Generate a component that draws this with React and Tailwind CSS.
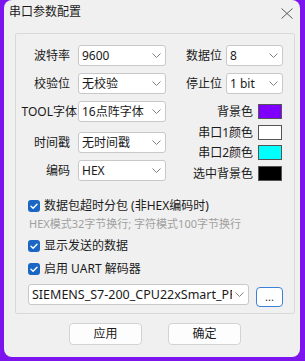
import React from 'react';

const Chevron = () => (
    <svg width="9" height="5" viewBox="0 0 9 5" className="shrink-0">
        <path d="M0.5 0.5 L4.5 4.5 L8.5 0.5" fill="none" stroke="#808080" strokeWidth="1" />
    </svg>
);

const Check = () => (
    <span className="w-[12px] h-[12px] rounded-[3px] bg-[#1a66c4] flex items-center justify-center shrink-0">
        <svg width="12" height="12" viewBox="0 0 12 12">
            <path d="M3 6.2 L5.1 8.2 L9 4.2" fill="none" stroke="#ffffff" strokeWidth="1.4" strokeLinecap="round" strokeLinejoin="round" />
        </svg>
    </span>
);

function Select({ value, width }) {
    return (
        <div className={`${width} h-[21px] bg-white border border-[#c8c8c8] rounded-[3px] flex items-center justify-between pl-[3px] pr-[4px]`}>
            <span className="text-[12px] leading-[16px] text-[#1a1a1a] whitespace-nowrap">{value}</span>
            <Chevron />
        </div>
    );
}

function Swatch({ label, color, className }) {
    return (
        <div className={`flex items-center justify-end h-[15px] pr-[12px] ${className}`}>
            <span className="text-[12px] leading-[15px] text-[#1a1a1a] mr-[5px]">{label}</span>
            <span className={`w-[24px] h-[15px] border border-[#555] ${color}`}></span>
        </div>
    );
}

export default function App() {
    // filas de la columna izquierda
    const leftRows = [
        { label: '波特率', value: '9600', mt: 'mt-[11px]', pr: 'pr-[8px]' },
        { label: '校验位', value: '无校验', mt: 'mt-[7px]', pr: 'pr-[8px]' },
        { label: 'TOOL字体', value: '16点阵字体', mt: 'mt-[7px]', pr: 'pr-[1px]' },
        { label: '时间戳', value: '无时间戳', mt: 'mt-[10px]', pr: 'pr-[8px]' },
        { label: '编码', value: 'HEX', mt: 'mt-[7px]', pr: 'pr-[8px]' },
    ];

    return (
        <div className="w-[305px] h-[361px] bg-[#7c14ee] overflow-hidden pl-[4px] font-['Noto_Sans','Noto_Sans_CJK_SC',sans-serif]">
            <div className="w-[296px] h-[357px] rounded-[8px] bg-[#f0f0f0] flex flex-col">

                {/* Barra de título */}
                <div className="h-[33px] flex items-start justify-between pl-[5px] pr-[7px] pt-[4px] shrink-0">
                    <span className="text-[12px] leading-[16px] text-[#1b1b1b]">串口参数配置</span>
                    <svg width="12" height="11" viewBox="0 0 12 11" className="mt-[4px]">
                        <path d="M0.5 0.5 L11.5 10.5 M11.5 0.5 L0.5 10.5" fill="none" stroke="#5a5a5a" strokeWidth="1" />
                    </svg>
                </div>

                {/* Grupo */}
                <div className="ml-[11px] w-[280px] h-[281px] border border-[#d9d9d9] rounded-[2px] flex flex-col shrink-0">
                    <div className="flex">
                        <div className="w-[150px] flex flex-col">
                            {leftRows.map(r => (
                                <div key={r.label} className={`flex items-center ${r.mt}`}>
                                    <span className={`w-[62px] text-right whitespace-nowrap text-[12px] leading-[16px] text-[#1a1a1a] ${r.pr}`}>{r.label}</span>
                                    <Select value={r.value} width="w-[88px]" />
                                </div>
                            ))}
                        </div>
                        <div className="flex-1 flex flex-col">
                            <div className="flex items-center justify-end pr-[11px] mt-[11px]">
                                <span className="text-[12px] leading-[16px] text-[#1a1a1a] mr-[4px]">数据位</span>
                                <Select value="8" width="w-[57px]" />
                            </div>
                            <div className="flex items-center justify-end pr-[11px] mt-[7px]">
                                <span className="text-[12px] leading-[16px] text-[#1a1a1a] mr-[4px]">停止位</span>
                                <Select value="1 bit" width="w-[57px]" />
                            </div>
                            <Swatch label="背景色" color="bg-[#8000ff]" className="mt-[10px]" />
                            <Swatch label="串口1颜色" color="bg-white" className="mt-[6px]" />
                            <Swatch label="串口2颜色" color="bg-[#00ffff]" className="mt-[5px]" />
                            <Swatch label="选中背景色" color="bg-black" className="mt-[6px]" />
                        </div>
                    </div>

                    {/* Opciones */}
                    <div className="flex items-center h-[18px] mt-[16px] pl-[12px]">
                        <Check />
                        <span className="ml-[4px] text-[12px] leading-[18px] text-[#1a1a1a] whitespace-nowrap">数据包超时分包 (非HEX编码时)</span>
                    </div>
                    <div className="h-[14px] mt-[2px] pl-[13px] text-[11px] leading-[14px] text-[#a0a0a0] whitespace-nowrap">HEX模式32字节换行; 字符模式100字节换行</div>
                    <div className="flex items-center h-[18px] mt-[6px] pl-[12px]">
                        <Check />
                        <span className="ml-[4px] text-[12px] leading-[18px] text-[#1a1a1a]">显示发送的数据</span>
                    </div>
                    <div className="flex items-center h-[18px] mt-[5px] pl-[12px]">
                        <Check />
                        <span className="ml-[4px] text-[12px] leading-[18px] text-[#1a1a1a]">启用 UART 解码器</span>
                    </div>
                    <div className="flex items-start mt-[6px] pl-[12px]">
                        <div className="w-[221px] h-[21px] bg-white border border-[#c8c8c8] rounded-[3px] flex items-center justify-between pl-[3px] pr-[4px]">
                            <span className="w-[200px] overflow-hidden whitespace-nowrap text-[12.5px] leading-[16px] text-[#1a1a1a]">SIEMENS_S7-200_CPU22xSmart_PPI</span>
                            <Chevron />
                        </div>
                        <button className="ml-[7px] mt-[3px] w-[27px] h-[20px] bg-white border border-[#3b82d6] rounded-[4px] text-[11px] leading-[12px] text-[#333] flex items-end justify-center pb-[3px]">...</button>
                    </div>
                </div>

                {/* Botones */}
                <div className="flex mt-[9px] pl-[65px] gap-[26px]">
                    <button className="w-[73px] h-[22px] bg-[#fdfdfd] border border-[#d3d3d3] rounded-[4px] text-[12px] leading-[16px] text-[#1a1a1a]">应用</button>
                    <button className="w-[73px] h-[22px] bg-[#fdfdfd] border border-[#d3d3d3] rounded-[4px] text-[12px] leading-[16px] text-[#1a1a1a]">确定</button>
                </div>
            </div>
        </div>
    );
}
